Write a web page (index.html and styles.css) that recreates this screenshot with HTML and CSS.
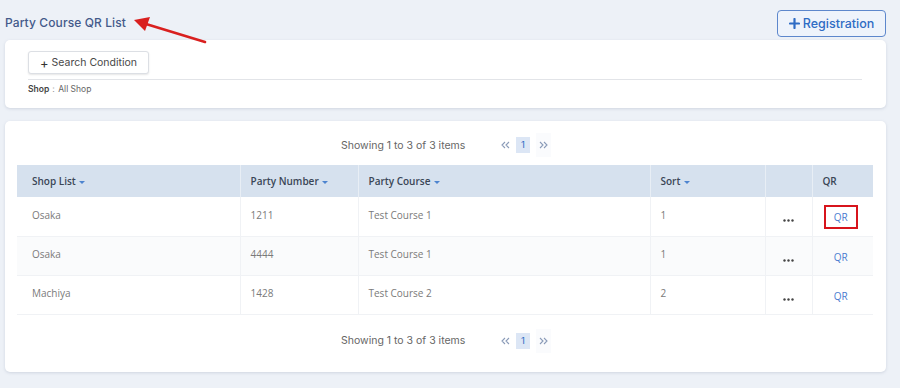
FILE: index.html
```html
<!DOCTYPE html>
<html>
<head>
<meta charset="utf-8">
<link rel="stylesheet" href="styles.css">
</head>
<body>
<div class="page">
  <div class="header">
    <h1 class="title">Party Course QR List</h1>
    <button class="reg-btn"><svg width="11" height="11" viewBox="0 0 11 11"><path d="M5.5 1v9M1 5.5h9" stroke="#2f6cc4" stroke-width="2.2" stroke-linecap="round"/></svg>Registration</button>
  </div>
  <div class="card search-card">
    <button class="search-btn"><span class="plus">+</span> Search Condition</button>
    <div class="divider"></div>
    <div class="cond"><b>Shop</b><span class="colon">：</span>All Shop</div>
  </div>
  <div class="card list-card">
    <div class="pager top">
      <span class="showing">Showing 1 to 3 of 3 items</span>
      <span class="nav"><svg width="9" height="8" viewBox="0 0 9 8"><path d="M4 1L1 4l3 3M8 1L5 4l3 3" fill="none" stroke="#8a9bb8" stroke-width="1.1"/></svg></span>
      <span class="pg-num">1</span>
      <span class="nav nav-next"><svg width="9" height="8" viewBox="0 0 9 8"><path d="M1 1l3 3-3 3M5 1l3 3-3 3" fill="none" stroke="#8a9bb8" stroke-width="1.1"/></svg></span>
    </div>
    <table class="grid">
      <colgroup>
        <col style="width:223px"><col style="width:118px"><col style="width:292px"><col style="width:115px"><col style="width:47px"><col style="width:61px">
      </colgroup>
      <thead>
        <tr>
          <th class="first">Shop List <span class="caret"></span></th>
          <th>Party Number <span class="caret"></span></th>
          <th>Party Course <span class="caret"></span></th>
          <th>Sort <span class="caret"></span></th>
          <th></th>
          <th>QR</th>
        </tr>
      </thead>
      <tbody>
        <tr>
          <td class="first">Osaka</td><td>1211</td><td>Test Course 1</td><td>1</td>
          <td class="dots"><svg width="11" height="3" viewBox="0 0 11 3"><circle cx="1.5" cy="1.5" r="1.2" fill="#444"/><circle cx="5.5" cy="1.5" r="1.2" fill="#444"/><circle cx="9.5" cy="1.5" r="1.2" fill="#444"/></svg></td>
          <td class="qr"><span class="qr-link boxed">QR</span></td>
        </tr>
        <tr class="alt">
          <td class="first">Osaka</td><td>4444</td><td>Test Course 1</td><td>1</td>
          <td class="dots"><svg width="11" height="3" viewBox="0 0 11 3"><circle cx="1.5" cy="1.5" r="1.2" fill="#444"/><circle cx="5.5" cy="1.5" r="1.2" fill="#444"/><circle cx="9.5" cy="1.5" r="1.2" fill="#444"/></svg></td>
          <td class="qr"><span class="qr-link">QR</span></td>
        </tr>
        <tr>
          <td class="first">Machiya</td><td>1428</td><td>Test Course 2</td><td>2</td>
          <td class="dots"><svg width="11" height="3" viewBox="0 0 11 3"><circle cx="1.5" cy="1.5" r="1.2" fill="#444"/><circle cx="5.5" cy="1.5" r="1.2" fill="#444"/><circle cx="9.5" cy="1.5" r="1.2" fill="#444"/></svg></td>
          <td class="qr"><span class="qr-link">QR</span></td>
        </tr>
      </tbody>
    </table>
    <div class="pager bottom">
      <span class="showing">Showing 1 to 3 of 3 items</span>
      <span class="nav"><svg width="9" height="8" viewBox="0 0 9 8"><path d="M4 1L1 4l3 3M8 1L5 4l3 3" fill="none" stroke="#8a9bb8" stroke-width="1.1"/></svg></span>
      <span class="pg-num">1</span>
      <span class="nav nav-next"><svg width="9" height="8" viewBox="0 0 9 8"><path d="M1 1l3 3-3 3M5 1l3 3-3 3" fill="none" stroke="#8a9bb8" stroke-width="1.1"/></svg></span>
    </div>
  </div>
  <svg class="arrow" width="80" height="32" viewBox="0 0 80 32">
    <line x1="73" y1="27" x2="14" y2="9" stroke="#d9201f" stroke-width="2.6" stroke-linecap="round"/>
    <polygon points="2,5 18,2 13,16" fill="#d9201f"/>
  </svg>
</div>
</body>
</html>
```
FILE: styles.css
```css
html, body {
  margin: 0;
  padding: 0;
}
body {
  background: #edf1f7;
  font-family: "Inter", "Open Sans", sans-serif;
  width: 900px;
  height: 388px;
  overflow: hidden;
}
.page {
  position: relative;
  padding: 0 14px 0 5px;
}
.header {
  height: 40px;
  display: flex;
  justify-content: space-between;
  align-items: flex-start;
}
.title {
  margin: 15px 0 0 0;
  font-size: 12px;
  font-weight: 500;
  color: #445a8a;
  letter-spacing: 0.1px;
}
.reg-btn {
  margin-top: 10px;
  width: 109px;
  height: 27px;
  border: 1px solid #5d87cc;
  border-radius: 4px;
  background: #eef3fb;
  color: #2f6cc4;
  font-family: "Inter", sans-serif;
  font-size: 12.5px;
  font-weight: 500;
  display: flex;
  align-items: center;
  justify-content: center;
  gap: 3px;
  padding: 0;
}
.card {
  background: #fff;
  border-radius: 5px;
  box-shadow: 0 1px 3px rgba(120, 130, 160, 0.25);
}
.search-card {
  height: 68px;
  box-sizing: border-box;
  padding: 11px 24px 0 23px;
}
.search-btn {
  width: 121px;
  height: 23px;
  border: 1px solid #dcdfe4;
  border-radius: 3px;
  background: #fff;
  box-shadow: 0 1px 2px rgba(0, 0, 0, 0.1);
  font-family: "Inter", sans-serif;
  font-size: 10.5px;
  color: #484848;
  padding: 0;
  display: flex;
  align-items: center;
  justify-content: center;
}
.search-btn .plus {
  font-size: 13px;
  margin-right: 3px;
  color: #333;
}
.divider {
  margin-top: 5px;
  height: 1px;
  background: #e2e4e8;
}
.cond {
  margin-top: 4px;
  font-size: 8.5px;
  color: #666;
}
.cond b {
  color: #444;
  font-weight: 600;
}
.cond .colon {
  color: #999;
}
.list-card {
  margin-top: 13px;
  height: 251px;
  box-sizing: border-box;
  padding: 0 13px 0 12px;
}
.pager {
  height: 44px;
  display: flex;
  align-items: center;
  justify-content: flex-start;
  padding-left: 324px;
  font-family: "Inter", sans-serif;
}
.pager.top {
  box-sizing: border-box;
  padding-top: 4px;
}
.pager.bottom {
  height: 52px;
}
.showing {
  font-size: 10.5px;
  color: #666;
  width: 157px;
}
.nav {
  width: 15px;
  height: 24px;
  display: flex;
  align-items: center;
  justify-content: center;
}
.pg-num {
  width: 14px;
  height: 16px;
  line-height: 16px;
  text-align: center;
  background: #dce6f5;
  color: #2f6cc4;
  font-size: 9.5px;
  margin-left: 3px;
}
.nav-next {
  margin-left: 6px;
  background: #fafbfd;
}
.grid {
  width: 856px;
  border-collapse: collapse;
  table-layout: fixed;
  font-family: "Open Sans", sans-serif;
  font-size: 10px;
}
.grid th {
  height: 32px;
  background: #d6e1ee;
  color: #3a4656;
  font-weight: 600;
  text-align: left;
  padding: 0 0 0 10px;
  border-left: 1px solid #e8eef5;
}
.grid th.first, .grid td.first {
  padding-left: 15px;
  border-left: none;
}
.caret {
  display: inline-block;
  width: 0;
  height: 0;
  border-left: 3px solid transparent;
  border-right: 3px solid transparent;
  border-top: 3px solid #4d84cf;
  vertical-align: middle;
  margin-left: 1px;
}
.grid td {
  height: 39px;
  box-sizing: border-box;
  padding: 0 0 3px 10px;
  color: #7a7a7a;
  border-left: 1px solid #f0f2f5;
  border-bottom: 1px solid #f0f2f5;
}
.grid tr.alt td {
  background: #fafbfc;
}
.grid td.dots {
  text-align: center;
  padding: 4px 0 0 0;
}
.grid td.qr {
  text-align: center;
  padding: 2px 4px 0 0;
}
.qr-link {
  color: #4a7bd0;
  font-size: 10px;
  display: inline-block;
  padding: 3px 8px;
  border: 2px solid transparent;
}
.qr-link.boxed {
  border-color: #d7141c;
}
.arrow {
  position: absolute;
  left: 132px;
  top: 15px;
}
```
